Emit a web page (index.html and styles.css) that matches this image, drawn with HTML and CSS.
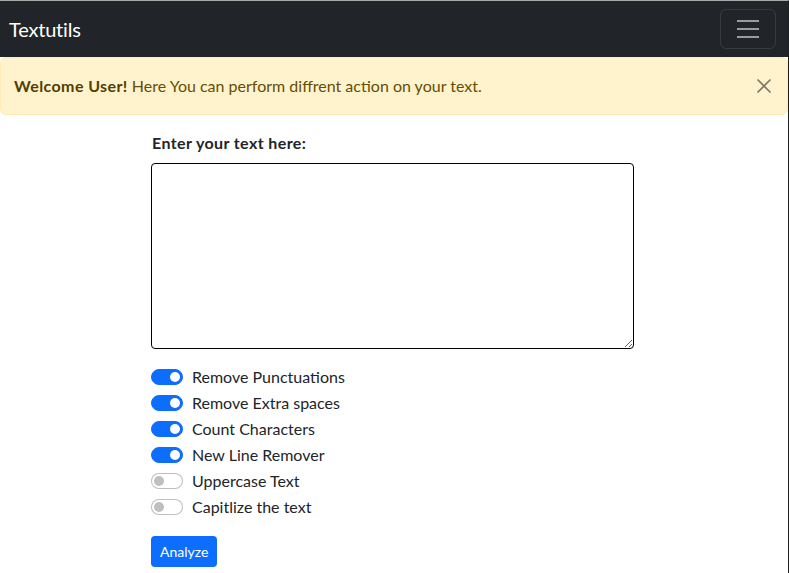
FILE: index.html
```html
<!DOCTYPE html>
<html lang="en">
<head>
<meta charset="utf-8">
<title>Textutils</title>
<link rel="stylesheet" href="styles.css">
</head>
<body>
<div class="frame">
  <nav class="navbar">
    <span class="brand">Textutils</span>
    <button class="toggler" type="button" aria-label="Toggle navigation">
      <svg width="30" height="30" viewBox="0 0 30 30"><path d="M4 7h22M4 15h22M4 23h22" stroke="rgba(255,255,255,0.55)" stroke-width="2"/></svg>
    </button>
  </nav>
  <div class="alert">
    <span><strong>Welcome User!</strong> Here You can perform diffrent action on your text.</span>
    <button class="close" type="button" aria-label="Close">
      <svg width="16" height="16" viewBox="0 0 16 16"><path d="M1.5 1.5l13 13M14.5 1.5l-13 13" stroke="#000" stroke-width="1.6"/></svg>
    </button>
  </div>
  <main class="main">
    <label class="label" for="box">Enter your text here:</label>
    <textarea id="box" class="textarea"></textarea>
    <div class="checks">
      <label class="check"><span class="switch on"></span>Remove Punctuations</label>
      <label class="check"><span class="switch on"></span>Remove Extra spaces</label>
      <label class="check"><span class="switch on"></span>Count Characters</label>
      <label class="check"><span class="switch on"></span>New Line Remover</label>
      <label class="check"><span class="switch"></span>Uppercase Text</label>
      <label class="check"><span class="switch"></span>Capitlize the text</label>
    </div>
    <button class="btn" type="button">Analyze</button>
  </main>
</div>
</body>
</html>
```
FILE: styles.css
```css
* { box-sizing: border-box; }
html, body { margin: 0; padding: 0; }
body {
  font-family: "Lato", "Noto Sans", sans-serif;
  font-size: 16px;
  line-height: 1.5;
  color: #212529;
  background: #fff;
}
.frame {
  min-height: 573px;
  border-top: 1px solid #a9a9a9;
  border-right: 1px solid #1e1e1e;
}
.navbar {
  height: 56px;
  background: #212529;
  display: flex;
  align-items: center;
  justify-content: space-between;
  padding: 0 12px 0 9px;
}
.brand {
  color: #fff;
  font-size: 20px;
  line-height: 30px;
  letter-spacing: -0.2px;
}
.toggler {
  width: 56px;
  height: 40px;
  padding: 4px 12px;
  background: transparent;
  border: 1px solid rgba(255,255,255,0.1);
  border-radius: 6px;
  display: flex;
  align-items: center;
  justify-content: center;
}
.toggler svg { display: block; }
.alert {
  height: 58px;
  background: #fff3cd;
  border: 1px solid #ffecb5;
  border-radius: 6px;
  color: #664d03;
  display: flex;
  align-items: center;
  justify-content: space-between;
  padding: 0 15px 0 13px;
}
.alert strong { font-weight: 700; color: #523e02; letter-spacing: 0.4px; }
.close {
  background: transparent;
  border: 0;
  padding: 0;
  opacity: 0.5;
  width: 16px;
  height: 16px;
}
.close svg { display: block; }
.main {
  width: 484px;
  margin-left: 151px;
  padding-top: 16px;
  display: flex;
  flex-direction: column;
  align-items: flex-start;
}
.label {
  font-weight: 700;
  margin-left: 1px;
  margin-bottom: 8px;
  letter-spacing: 0.4px;
}
.textarea {
  width: 483px;
  height: 186px;
  border: 1px solid #000;
  border-radius: 4px;
  font: inherit;
  margin: 0 0 16px;
}
.checks {
  display: flex;
  flex-direction: column;
  gap: 2px;
}
.check {
  display: flex;
  align-items: center;
  gap: 9px;
  height: 24px;
}
.switch {
  width: 32px;
  height: 16px;
  border-radius: 8px;
  border: 1px solid rgba(0,0,0,0.25);
  background: #fff;
  position: relative;
}
.switch::after {
  content: "";
  position: absolute;
  top: 2px;
  left: 2px;
  width: 10px;
  height: 10px;
  border-radius: 50%;
  background: #bfbfbf;
}
.switch.on {
  background: #0d6efd;
  border-color: #0d6efd;
}
.switch.on::after {
  left: auto;
  right: 2px;
  background: #fff;
}
.btn {
  margin-top: 17px;
  height: 31px;
  padding: 0 9px;
  background: #0d6efd;
  color: #fff;
  border: 0;
  border-radius: 4px;
  font-family: inherit;
  font-size: 14px;
}
```
